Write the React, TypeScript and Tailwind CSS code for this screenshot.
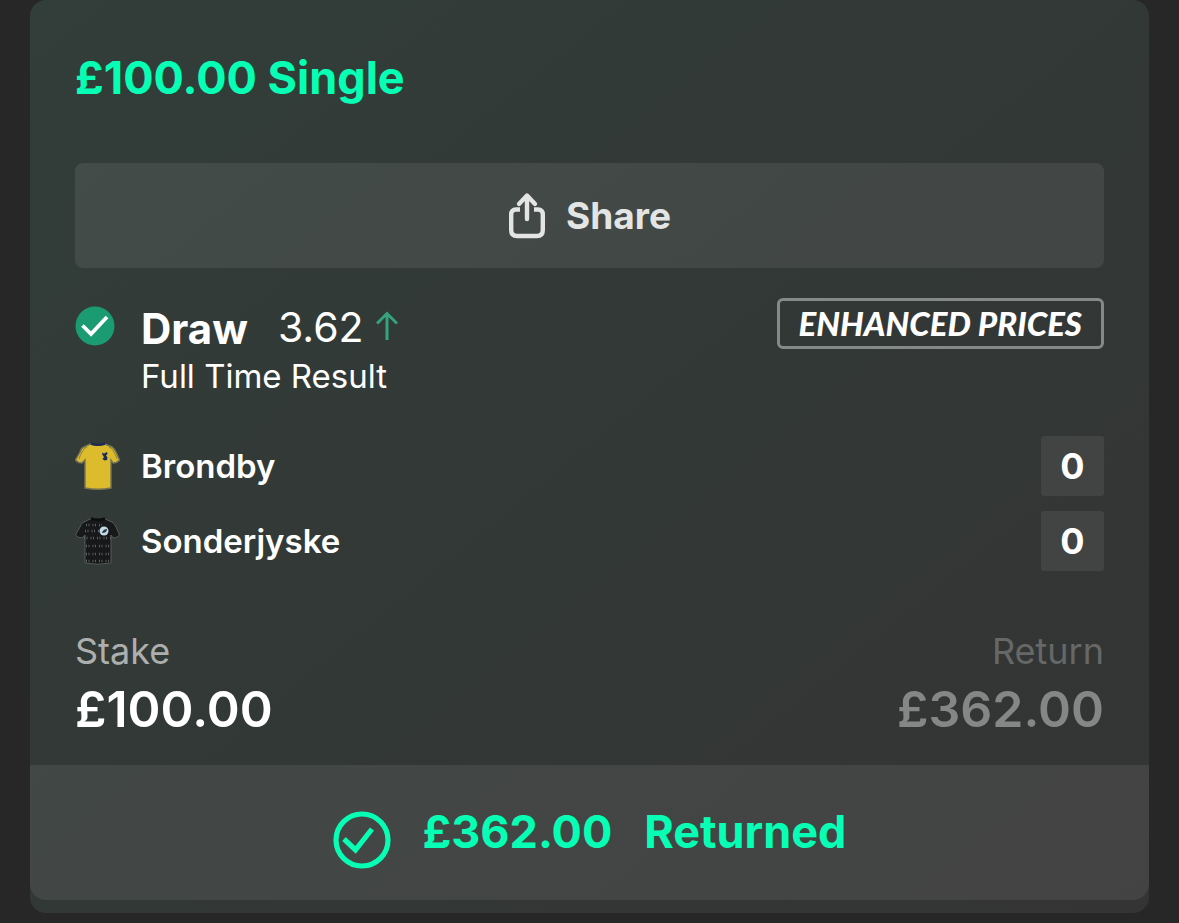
type TeamProps = {
  name: string;
  score: number;
  shirt: React.ReactNode;
};

const SHIRT_PATH = 'M14 3 Q22 5 29 3 L36 6 Q38 7 40 11 L43.500 19 Q41 22 37 22 L35 19 V47 Q22 49.500 9 47 V19 L6 22 Q2 22 -0.500 19 L4 11 Q5 7 8 6 Z';

function YellowShirt() {
  return (
    <svg viewBox="-1 0 46 51" className="h-[51px] w-[46px] shrink-0" aria-hidden="true">
      <path d={SHIRT_PATH} fill="#dcbb2c" stroke="#747454" strokeWidth="1.4" />
      <path d="M11 6 Q6 8 3 18 M33 6 Q38 8 41 18" fill="none" stroke="#8f8238" strokeWidth="1" />
      <path d="M15 2.500 Q22 5 29 2.500" fill="none" stroke="#1e2b50" strokeWidth="2.500" />
      <path d="M26 11.500 L28 12.500 L31 11 L31.500 13 L30 14.500 L31.500 16.500 L31 19 L28.500 19.500 L26.500 18 L28 16 L26.500 14 Z" fill="#1d2d59" />
    </svg>
  );
}

function BlackShirt() {
  return (
    <svg viewBox="-1 0 46 51" className="h-[51px] w-[46px] shrink-0" aria-hidden="true">
      <path d={SHIRT_PATH} fill="#171819" stroke="#555b59" strokeWidth="1" />
      <path d="M15 2.500 Q22 5 29 2.500" fill="none" stroke="#0c0d0e" strokeWidth="2.500" />
      <g fill="none" stroke="#5c5f61" strokeWidth="2.500" strokeDasharray="1 1.5 1 3">
        <path d="M10 9 h16" />
        <path d="M9 15 h14" />
        <path d="M8 22 h27" />
        <path d="M10 30 h24" />
        <path d="M10 38 h24" />
        <path d="M10 45 h24" />
      </g>
      <circle cx="28" cy="15" r="4.500" fill="#c5d9e5" />
      <path d="M26 17 q1 -4 5 -4 q0 4 -5 4z" fill="#24384a" />
    </svg>
  );
}

function ShareIcon() {
  return (
    <svg viewBox="0 0 38 48" className="h-12 w-[38px]" fill="none" stroke="currentColor" strokeWidth="4.400" strokeLinecap="round" strokeLinejoin="round" aria-hidden="true">
      <path d="M12 17.500 H8 Q3.200 17.500 3.200 22.500 V38 Q3.200 44 9 44 H29 Q34.800 44 34.800 38 V22.500 Q34.800 17.500 30 17.500 H26" strokeLinecap="butt" />
      <path d="M19 27 V4 M11 12 L19 3.500 L27 12" />
    </svg>
  );
}

function Team({ name, score, shirt }: TeamProps) {
  return (
    <li className="flex h-[60px] items-center">
      {shirt}
      <span className="ml-5 flex-1 text-[33px] leading-[44px] font-semibold">{name}</span>
      <span className="flex h-full w-[63px] items-center justify-center rounded-[3px] bg-[#424443] text-[36px] font-bold">
        {score}
      </span>
    </li>
  );
}

export default function App() {
  return (
    <main className="min-h-screen bg-[#272727] px-[30px] pb-[10px] font-['Inter',sans-serif] text-white">
      <article className="overflow-hidden rounded-[16px] bg-linear-to-br from-[#323e3a] via-[#323836] to-[#343434] pb-[13px]">
        <div className="px-[45px] pt-[52px] pb-[26px]">
          <h1 className="text-[45px] leading-[52px] font-bold text-[#06ffb4]">£100.00 Single</h1>

          <button type="button" className="mt-[59px] flex h-[105px] w-full items-center justify-center gap-5 rounded-[8px] bg-white/8 text-[37px] font-bold text-[#e3e5e4]">
            <ShareIcon />
            Share
          </button>

          {/* Selection */}
          <section className="mt-[30px] flex items-start">
            <svg viewBox="0 0 40 40" className="mt-2 h-10 w-10 shrink-0" aria-hidden="true">
              <circle cx="20" cy="20" r="19.500" fill="#1b9b72" />
              <path d="M7.500 19.500 L16 28 L32 11" fill="none" stroke="white" strokeWidth="3.800" />
            </svg>
            <div className="ml-[26px] flex-1 pt-1">
              <div className="flex h-[52px] items-center text-[42px]">
                <h2 className="font-bold">Draw</h2>
                <span className="ml-[30px] text-[41px]">3.62</span>
                <svg viewBox="0 0 22 30" className="mb-1 ml-3 h-[30px] w-[22px]" fill="none" stroke="#37a37e" strokeWidth="3" aria-hidden="true">
                  <path d="M11 29 V3 M1 12.500 L11 2.500 L21 12.500" />
                </svg>
              </div>
              <p className="text-[33px] leading-[44px]">Full Time Result</p>
            </div>
            <span className="flex h-[51px] items-center rounded-[6px] border-3 border-[#858a88] px-[19px] font-['Lato',sans-serif] text-[33px] font-black italic">
              ENHANCED PRICES
            </span>
          </section>

          <ul className="mt-[38px] space-y-[15px]">
            <Team name="Brondby" score={0} shirt={<YellowShirt />} />
            <Team name="Sonderjyske" score={0} shirt={<BlackShirt />} />
          </ul>

          <dl className="mt-[58px] flex justify-between">
            <div>
              <dt className="text-[36px] leading-[44px] text-[#adafae]">Stake</dt>
              <dd className="mt-[6px] text-[50px] leading-[60px] font-semibold">£100.00</dd>
            </div>
            <div className="text-right">
              <dt className="text-[36px] leading-[44px] text-[#666867]">Return</dt>
              <dd className="mt-[6px] text-[50px] leading-[60px] font-semibold text-[#858686]">£362.00</dd>
            </div>
          </dl>
        </div>

        {/* Settled amount */}
        <footer className="flex h-[135px] items-center justify-center rounded-b-[16px] bg-white/8 pb-[2px] text-[45px] font-bold text-[#06ffb4]">
          <svg viewBox="0 0 58 58" className="mt-4 h-[58px] w-[58px]" fill="none" stroke="currentColor" strokeWidth="5.200" aria-hidden="true">
            <circle cx="29" cy="29" r="26" />
            <path d="M11 28 L22.500 39 L39 18" />
          </svg>
          <span className="ml-8">£362.00</span>
          <span className="ml-8">Returned</span>
        </footer>
      </article>
    </main>
  );
}
